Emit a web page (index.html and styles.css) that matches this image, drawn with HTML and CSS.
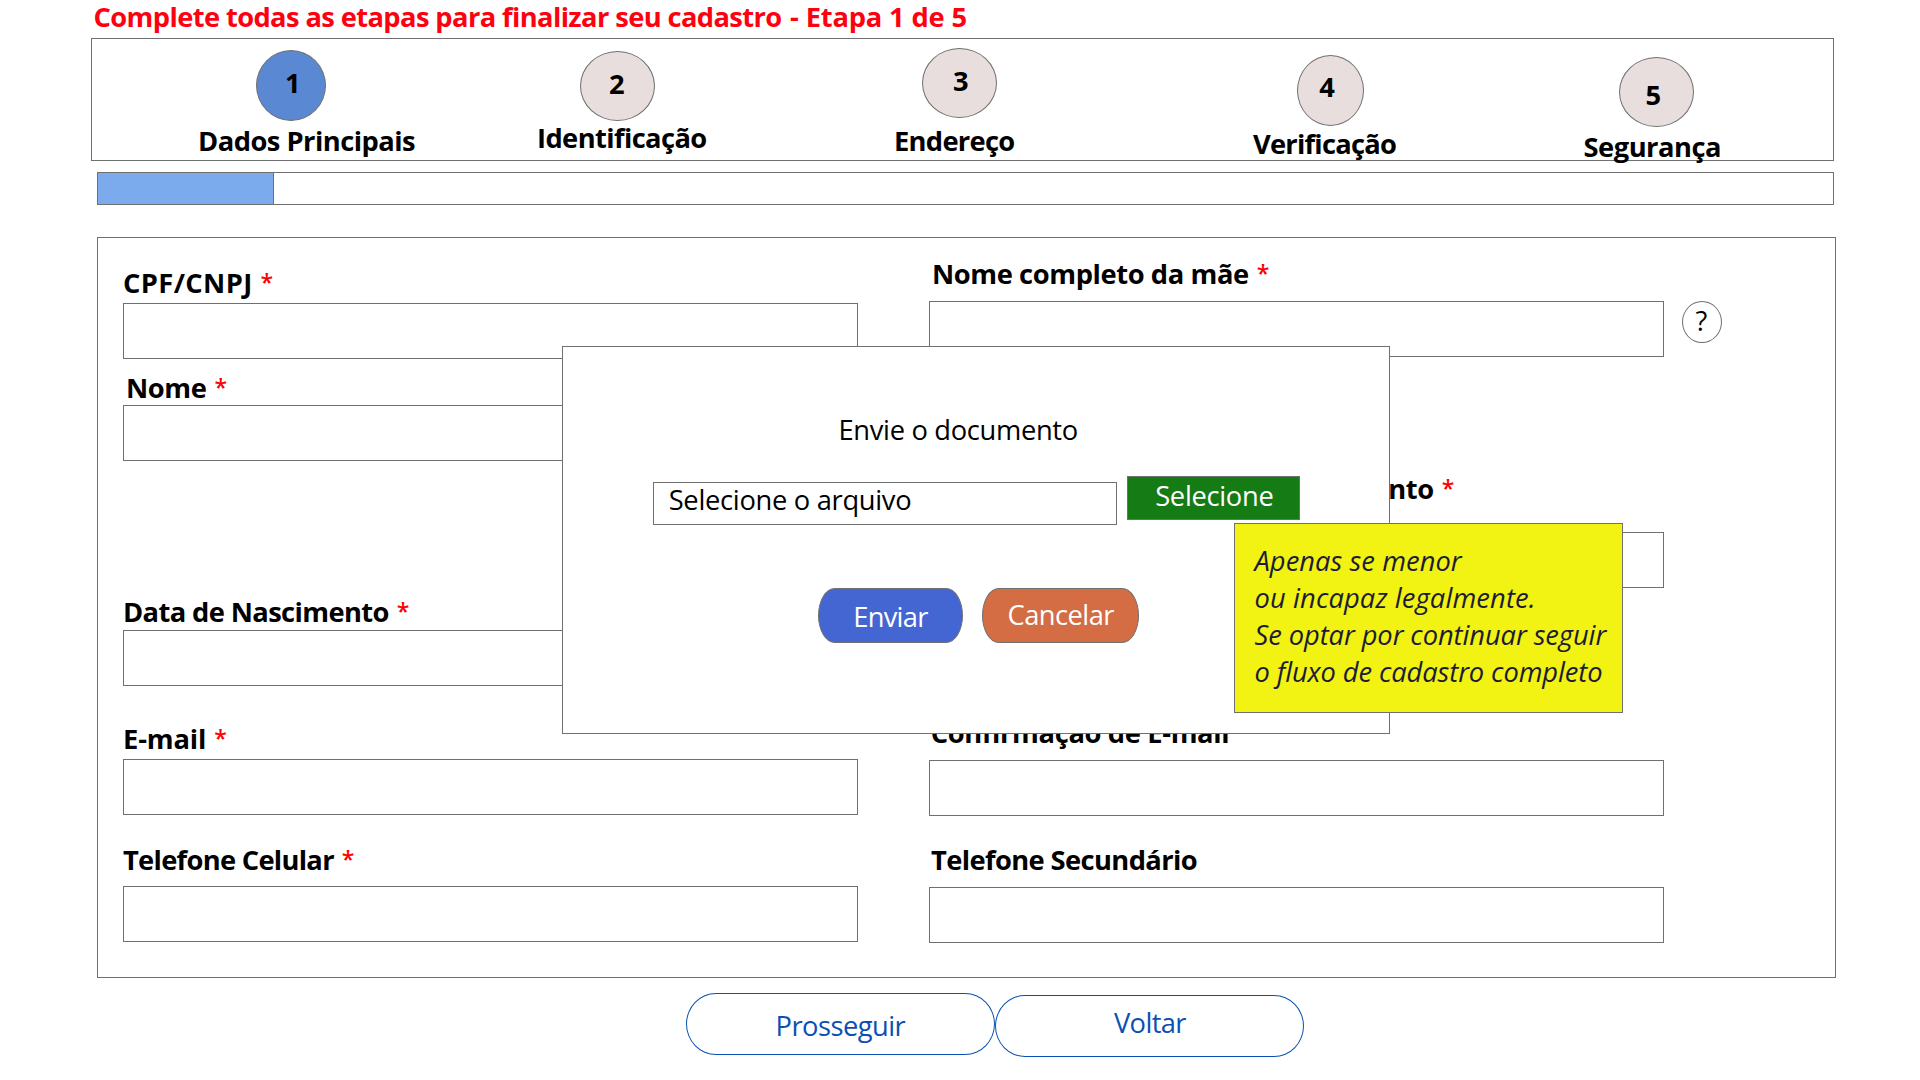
FILE: index.html
```html
<!DOCTYPE html>
<html lang="pt-BR">
<head>
<meta charset="utf-8">
<title>Cadastro - Etapa 1 de 5</title>
<link rel="stylesheet" href="styles.css">
</head>
<body>
<main class="page">
  <h1 class="title">Complete todas as etapas para finalizar seu cadastro <span class="title-step">- Etapa 1 de 5</span></h1>

  <ol class="steps">
    <li class="step step-1"><span class="circle active">1</span><span class="step-name">Dados Principais</span></li>
    <li class="step step-2"><span class="circle">2</span><span class="step-name">Identificação</span></li>
    <li class="step step-3"><span class="circle">3</span><span class="step-name">Endereço</span></li>
    <li class="step step-4"><span class="circle">4</span><span class="step-name">Verificação</span></li>
    <li class="step step-5"><span class="circle">5</span><span class="step-name">Segurança</span></li>
  </ol>

  <div class="progress"><div class="progress-fill"></div></div>

  <form class="form">
    <div class="column">
      <div class="field cpf"><label><span class="name">CPF/CNPJ</span><span class="req">*</span></label><div class="input"></div></div>
      <div class="field nome"><label><span class="name">Nome</span><span class="req">*</span></label><div class="input"></div></div>
      <div class="field nascimento"><label><span class="name">Data de Nascimento</span><span class="req">*</span></label><div class="input"></div></div>
      <div class="field email"><label><span class="name">E-mail</span><span class="req">*</span></label><div class="input"></div></div>
      <div class="field celular"><label><span class="name">Telefone Celular</span><span class="req">*</span></label><div class="input"></div></div>
    </div>
    <div class="column">
      <div class="field mae">
        <label><span class="name">Nome completo da mãe</span><span class="req">*</span></label>
        <div class="input-row"><div class="input"></div><span class="help">?</span></div>
      </div>
      <div class="field documento"><label><span class="name">Documento</span><span class="req">*</span></label><div class="input"></div></div>
      <div class="field confirmacao"><label><span class="name">Confirmação de E-mail</span></label><div class="input"></div></div>
      <div class="field secundario"><label><span class="name">Telefone Secundário</span></label><div class="input"></div></div>
    </div>
  </form>

  <div class="footer">
    <button class="nav next">Prosseguir</button>
    <button class="nav back">Voltar</button>
  </div>

  <section class="modal">
    <h2 class="modal-title">Envie o documento</h2>
    <div class="file-row">
      <div class="file-input"><span>Selecione o arquivo</span></div>
      <button class="select">Selecione</button>
    </div>
    <div class="actions">
      <button class="action send">Enviar</button>
      <button class="action cancel">Cancelar</button>
    </div>
  </section>

  <aside class="note">
    <span class="note-1">Apenas se menor</span>
    <span class="note-2">ou incapaz legalmente.</span>
    <span class="note-3">Se optar por continuar seguir</span>
    <span class="note-4">o fluxo de cadastro completo</span>
  </aside>
</main>
</body>
</html>
```
FILE: styles.css
```css
* { box-sizing: border-box; margin: 0; padding: 0; }

body {
  background: #fff;
  color: #000;
  font: 27.3px/37px "Open Sans", "Noto Sans", sans-serif;
  white-space: nowrap;
}

button {
  font: inherit;
  text-align: left;
  display: flex;
  align-items: flex-start;
}

.page {
  position: relative;
  display: flex;
  flex-direction: column;
  align-items: flex-start;
  width: 1920px;
  height: 1080px;
}

.title {
  margin: 0 0 5px 93.5px;
  font-size: inherit;
  font-weight: 700;
  line-height: 33px;
  letter-spacing: -0.61px;
  color: #ff0010;
}
.title-step { margin-left: 2px; letter-spacing: -0.17px; }

/* Steps */
.steps {
  display: grid;
  grid-template-columns: 349px repeat(4, 348px);
  width: 1743px;
  height: 123px;
  margin-left: 91px;
  border: 1px solid #707070;
  list-style: none;
  font-weight: 700;
}
.step { display: flex; flex-direction: column; align-items: flex-start; }
.circle {
  flex: none;
  width: 75px;
  height: 70px;
  padding-top: 13px;
  border: 1px solid #707070;
  border-radius: 50%;
  background: #e8dede;
}
.circle.active { background: #5b88d2; }

.step-1 .circle { width: 70px; height: 71px; margin: 11px 0 1px 164px; padding-left: 28px; }
.step-2 .circle { margin: 12px 0 -2px 139px; padding-left: 28px; }
.step-3 .circle { margin: 9px 0 4px 133px; padding-left: 30px; }
.step-4 .circle { width: 67px; height: 71px; margin: 16px 0 -1px 160px; padding: 12px 0 0 21.2px; }
.step-5 .circle { margin: 18px 0 1px 134px; padding: 18px 0 0 25.5px; }

.step-1 .step-name { margin-left: 106px; letter-spacing: -0.519px; }
.step-2 .step-name { margin-left: 96px; letter-spacing: -0.6px; }
.step-3 .step-name { margin-left: 105px; letter-spacing: -0.7px; }
.step-4 .step-name { margin-left: 116px; letter-spacing: -0.76px; }
.step-5 .step-name { margin-left: 98.5px; letter-spacing: -0.485px; }

/* Progress */
.progress {
  width: 1737px;
  height: 33px;
  margin: 11px 0 32px 97px;
  border: 1px solid #707070;
}
.progress-fill {
  width: 176px;
  height: 100%;
  border-right: 1px solid #707070;
  background: #7babec;
}

/* Form */
.form {
  display: flex;
  gap: 71px;
  width: 1739px;
  height: 741px;
  margin-left: 97px;
  padding-left: 25px;
  border: 1px solid #707070;
}
.column { width: 735px; }
.column, .field { display: flex; flex-direction: column; }
.input { flex: none; width: 735px; height: 56px; border: 1px solid #707070; }
.input-row { display: flex; gap: 18px; }
label { display: flex; font-weight: 700; }
.req {
  height: 37px;
  margin-left: 8px;
  font-size: 23px;
  font-weight: 600;
  color: #ff0000;
}

.cpf label { margin: 26px 0 2px 0; letter-spacing: 0.38px; }
.nome label { margin: 10px 0 -1px 3px; letter-spacing: -0.4px; }
.nascimento label { margin: 132px 0 0 0; letter-spacing: -0.615px; }
.email label { margin: 34px 0 2px 0; letter-spacing: -0.139px; }
.celular label { margin: 26px 0 8px 0; letter-spacing: -0.7px; }

.mae label { margin: 17px 0 9px 3px; letter-spacing: -0.4px; }
.documento { margin-top: -1px; }
.documento label { justify-content: flex-end; margin: 114px 210px 25px 0; letter-spacing: -0.4px; }
.confirmacao label { margin: 126px 0 9px 1.7px; letter-spacing: -0.35px; }
.secundario label { margin: 25px 0 9px 2px; letter-spacing: -0.6px; }

.help {
  flex: none;
  width: 40px;
  height: 42px;
  padding-left: 12.5px;
  border: 1px solid #707070;
  border-radius: 50%;
}

/* Footer */
.footer { display: flex; align-items: flex-start; margin: 15px 0 0 686px; }
.nav {
  width: 309px;
  height: 62px;
  border: 1px solid #0a50b4;
  border-radius: 30px / 31px;
  background: #fff;
  color: #0a50b4;
}
.next { padding: 13px 0 0 88.6px; letter-spacing: -0.533px; }
.back { margin-top: 2px; padding: 8px 0 0 118px; letter-spacing: -0.65px; }

/* Upload dialog */
.modal {
  position: absolute;
  left: 562px;
  top: 346px;
  width: 828px;
  height: 388px;
  border: 1px solid #707070;
  background: #fff;
}
.modal-title {
  margin: 64px 0 28px 275.5px;
  font-size: inherit;
  font-weight: 400;
  letter-spacing: -0.32px;
}
.file-row { display: flex; gap: 10px; margin-left: 90px; }
.file-input {
  display: flex;
  width: 464px;
  height: 43px;
  margin-top: 6px;
  padding-left: 14.7px;
  border: 1px solid #707070;
  letter-spacing: -0.298px;
}
.file-input span { margin-top: -2px; }
.select {
  width: 173px;
  height: 44px;
  padding-left: 27.2px;
  border: 1px solid #707070;
  background: #157b15;
  color: #fff;
  letter-spacing: -0.3px;
}
.actions { display: flex; gap: 19px; margin: 63px 0 0 255px; }
.action {
  height: 55px;
  border: 1px solid #707070;
  border-radius: 17px / 27.5px;
  color: #fff;
}
.send { width: 145px; padding: 9px 0 0 34.2px; background: #4466d2; letter-spacing: -0.72px; }
.cancel { width: 157px; padding: 7px 0 0 24.6px; background: #d46c44; letter-spacing: -0.56px; }

/* Sticky note */
.note {
  position: absolute;
  left: 1234px;
  top: 523px;
  display: flex;
  flex-direction: column;
  width: 389px;
  height: 190px;
  padding: 18px 0 0 19.5px;
  border: 1px solid #707070;
  background: #f2f213;
  color: #1c1c38;
  font-style: italic;
}
.note-1 { letter-spacing: 0.05px; }
.note-2 { letter-spacing: 0.12px; }
.note-3 { letter-spacing: -0.08px; }
.note-4 { letter-spacing: -0.1px; }
```
